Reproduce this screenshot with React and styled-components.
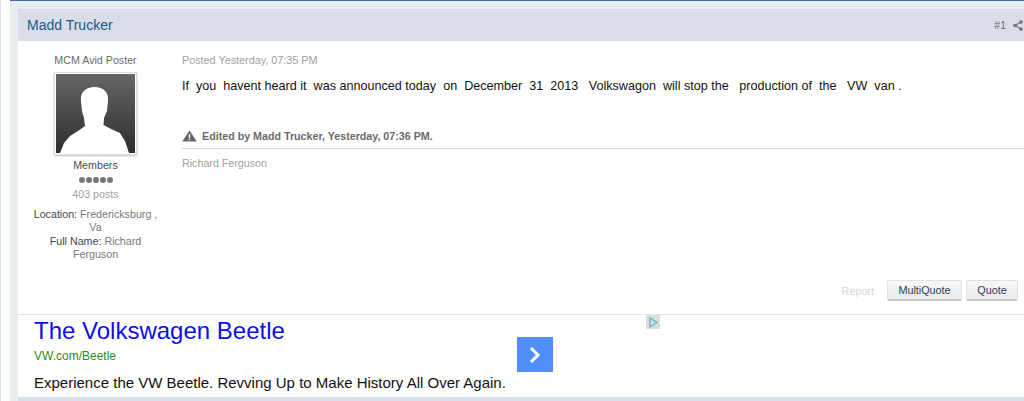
import React from 'react';
import styled, { createGlobalStyle } from 'styled-components';

const Global = createGlobalStyle`
	html, body {
		margin: 0;
		padding: 0;
		background: #fff;
	}
	body {
		width: 1024px;
		height: 401px;
		overflow: hidden;
		font-family: 'Liberation Sans', Arial, sans-serif;
	}
`;

const Page = styled.div`
	height: 401px;
	box-sizing: border-box;
	padding-left: 10px;
	border-left: 1px solid #dfe3f0;
`;

const Forum = styled.div`
	height: 401px;
	box-sizing: border-box;
	margin-left: -1px;
	padding: 8px 0 0 8px;
	background: #e9eef3;
	border-top: 1px solid #3d6a9f;
	display: flex;
	flex-direction: column;
`;

const PostHeader = styled.div`
	height: 32px;
	flex: none;
	background: #d8dde8;
	display: flex;
	align-items: center;
	justify-content: space-between;
	padding: 0 0 0 9px;
`;

const Author = styled.h2`
	margin: 0;
	font-size: 14px;
	font-weight: normal;
	color: #225985;
`;

const PostMeta = styled.div`
	display: flex;
	align-items: center;
	gap: 7px;
	font-size: 10.5px;
	color: #6f6f6f;
	margin-right: 1px;
`;

const PostBody = styled.div`
	height: 274px;
	flex: none;
	box-sizing: border-box;
	background: #fff;
	display: flex;
	border-bottom: 1px solid #dbe6ee;
`;

const UserCol = styled.div`
	width: 155px;
	flex: none;
	padding-top: 13px;
	display: flex;
	flex-direction: column;
	align-items: center;
	font-size: 10.7px;
	line-height: 13.5px;
	color: #6b6b6b;
	text-align: center;
`;

const AvatarFrame = styled.div`
	margin: 4px 0 4px;
	border: 1px solid #dcdcdc;
	padding: 1px;
	box-shadow: 0 1px 2px rgba(0, 0, 0, 0.25);
	background: #fff;
	svg {
		display: block;
	}
`;

const Group = styled.div`
	color: #4d4d4d;
`;

const Pips = styled.div`
	display: flex;
	gap: 1px;
	margin: 5px 0 5px;
`;

const Pip = styled.span`
	width: 6px;
	height: 6px;
	border-radius: 50%;
	background: #777;
`;

const Posts = styled.div`
	color: #a3a3a3;
	margin-bottom: 6px;
`;

const Field = styled.div`
	width: 130px;
	line-height: 13.6px;
	color: #777;
	b {
		font-weight: normal;
		color: #444;
	}
`;

const Content = styled.div`
	flex: 1;
	min-width: 0;
	padding: 13px 0 0 9px;
	display: flex;
	flex-direction: column;
`;

const Posted = styled.div`
	font-size: 10.8px;
	line-height: 13px;
	color: #a0a0a0;
`;

const Message = styled.p`
	margin: 12px 0 0;
	font-size: 12.6px;
	line-height: 14px;
	color: #111;
	white-space: pre;
`;

const EditNote = styled.div`
	margin-top: 33px;
	height: 23px;
	box-sizing: border-box;
	padding-bottom: 3px;
	display: flex;
	align-items: center;
	gap: 5px;
	font-size: 10.7px;
	font-weight: bold;
	color: #6a6a6a;
	border-bottom: 1px solid #d6d6d6;
`;

const Signature = styled.div`
	margin-top: 8px;
	font-size: 10.7px;
	line-height: 13px;
	color: #a0a0a0;
`;

const Controls = styled.div`
	margin-top: auto;
	padding: 0 6px 13px 0;
	display: flex;
	align-items: center;
	justify-content: flex-end;
	gap: 4px;
`;

const ReportLink = styled.span`
	font-size: 10.8px;
	color: #d3d8de;
	margin-right: 9px;
`;

const Button = styled.button`
	height: 21px;
	width: ${(p) => p.$w}px;
	padding: 0;
	border: 1px solid #e2e2e2;
	border-bottom: 2px solid #c8c8c8;
	border-radius: 2px;
	background: linear-gradient(#f8f8f8, #e9ebee);
	font-family: inherit;
	font-size: 10.8px;
	color: #2c3d55;
`;

const AdBlock = styled.div`
	height: 82px;
	flex: none;
	background: #fff;
	position: relative;
	padding-left: 16px;
`;

const AdTitle = styled.a`
	display: block;
	padding-top: 2px;
	font-size: 24px;
	line-height: 28px;
	color: #0d0dee;
`;

const AdUrl = styled.div`
	margin-top: 4px;
	font-size: 12px;
	line-height: 14px;
	color: #2f8a1d;
`;

const AdText = styled.div`
	margin-top: 11px;
	font-size: 15px;
	line-height: 17px;
	color: #111;
`;

const AdArrow = styled.div`
	position: absolute;
	left: 499px;
	top: 22px;
	width: 36px;
	height: 35px;
	background: #4f8ffb;
	display: grid;
	place-items: center;
`;

const AdChoices = styled.div`
	position: absolute;
	left: 628px;
	top: 0;
	width: 14px;
	height: 14px;
	background: #dcdcdc;
	display: grid;
	place-items: center;
`;

const Footer = styled.div`
	flex: 1;
	background: #d8dde8;
`;

function Avatar() {
	return (
		<svg width='79' height='79' viewBox='0 0 79 79'>
			<defs>
				<linearGradient id='avatarBg' x1='0' y1='0' x2='0' y2='1'>
					<stop offset='0' stopColor='#666' />
					<stop offset='1' stopColor='#2e2e2e' />
				</linearGradient>
			</defs>
			<rect width='79' height='79' fill='url(#avatarBg)' />
			<path
				d='M4 79 L8 69 L14 62 L22 57 L29 52 L28 44 L26 37 L25 27 C24 18 30 13 38.5 13 C47 13 53 18 52 27 L51 37 L48 44 L47.5 51 L55 55 L64 59 L69 67 L73 79 Z'
				fill='#fff'
			/>
		</svg>
	);
}

function ShareIcon() {
	return (
		<svg width='10' height='11' viewBox='0 0 10 11' fill='none' stroke='#777' strokeWidth='1.3'>
			<path d='M8 2 L2 5.5 L8 9' />
			<circle cx='8' cy='2' r='1.2' fill='#777' />
			<circle cx='2' cy='5.5' r='1.2' fill='#777' />
			<circle cx='8' cy='9' r='1.2' fill='#777' />
		</svg>
	);
}

function WarnIcon() {
	return (
		<svg width='15' height='12' viewBox='0 0 15 12'>
			<path d='M7.5 0.5 L14.8 11.5 L0.2 11.5 Z' fill='#666' />
			<rect x='6.8' y='4' width='1.4' height='4' fill='#fff' />
			<rect x='6.8' y='8.8' width='1.4' height='1.4' fill='#fff' />
		</svg>
	);
}

export default function App() {
	return (
		<>
			<Global />
			<Page>
				<Forum>
					<PostHeader>
						<Author>Madd Trucker</Author>
						<PostMeta>
							#1 <ShareIcon />
						</PostMeta>
					</PostHeader>
					<PostBody>
						<UserCol>
							<div>MCM Avid Poster</div>
							<AvatarFrame>
								<Avatar />
							</AvatarFrame>
							<Group>Members</Group>
							<Pips>
								{[0, 1, 2, 3, 4].map((i) => (
									<Pip key={i} />
								))}
							</Pips>
							<Posts>403 posts</Posts>
							<Field>
								<b>Location:</b> Fredericksburg , Va
							</Field>
							<Field>
								<b>Full Name:</b> Richard Ferguson
							</Field>
						</UserCol>
						<Content>
							<Posted>Posted Yesterday, 07:35 PM</Posted>
							<Message>
								{'If  you  havent heard it  was announced today  on  December  31  2013   Volkswagon  will stop the   production of  the   VW  van .'}
							</Message>
							<EditNote>
								<WarnIcon />
								Edited by Madd Trucker, Yesterday, 07:36 PM.
							</EditNote>
							<Signature>Richard Ferguson</Signature>
							<Controls>
								<ReportLink>Report</ReportLink>
								<Button $w={75}>MultiQuote</Button>
								<Button $w={52}>Quote</Button>
							</Controls>
						</Content>
					</PostBody>
					<AdBlock>
						<AdTitle>The Volkswagen Beetle</AdTitle>
						<AdUrl>VW.com/Beetle</AdUrl>
						<AdText>Experience the VW Beetle. Revving Up to Make History All Over Again.</AdText>
						<AdArrow>
							<svg width='14' height='20' viewBox='0 0 14 20' fill='none' stroke='#fff' strokeWidth='3'>
								<path d='M3 3 L10 10 L3 17' />
							</svg>
						</AdArrow>
						<AdChoices>
							<svg width='10' height='11' viewBox='0 0 10 11' fill='none' stroke='#4fb8cf' strokeWidth='1.2'>
								<path d='M2 1 V10 L9 5.5 Z' />
							</svg>
						</AdChoices>
					</AdBlock>
					<Footer />
				</Forum>
			</Page>
		</>
	);
}
